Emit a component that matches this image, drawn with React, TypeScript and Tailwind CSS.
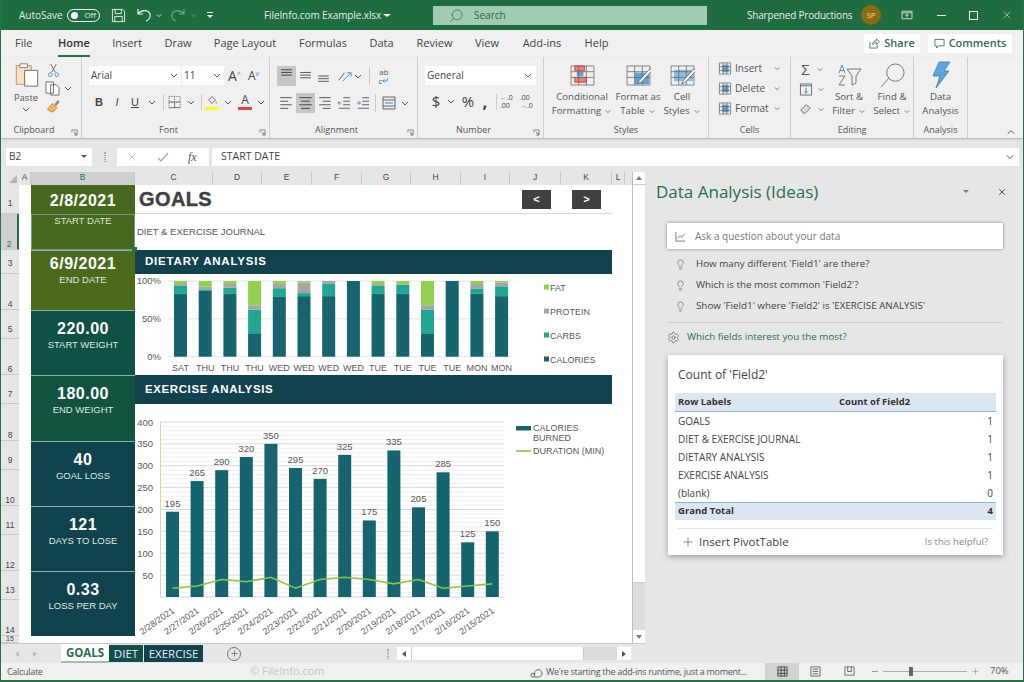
import { ChevronDown, ChevronUp, Lightbulb, Plus, Search, Settings, X } from "lucide-react";
import type { ReactNode } from "react";

const ui = { fontFamily: '"Open Sans", "Noto Sans", sans-serif' };
const arial = { fontFamily: '"Liberation Sans", Arial, sans-serif' };

function Chev({ className = "" }: { className?: string }) {
  return (
    <svg viewBox="0 0 8 5" className={`h-[5px] w-[8px] shrink-0 ${className}`} fill="none" stroke="#555" strokeWidth="1">
      <path d="M1 1l3 3 3-3" />
    </svg>
  );
}

function Slot({ className = "", children }: { className?: string; children?: ReactNode }) {
  return <span className={`flex shrink-0 items-center justify-center ${className}`}>{children}</span>;
}

function Lines({ ys, xs, active }: { ys?: number[]; xs: [number, number][]; active?: boolean }) {
  const rows = ys ?? [3, 7, 11, 15];
  return (
    <svg viewBox="0 0 16 18" className="h-[16px] w-[15px]" stroke={active ? "#444" : "#555"} strokeWidth="1.1">
      {rows.map((y, i) => (
        <path key={y} d={`M${xs[i % xs.length][0]} ${y}H${xs[i % xs.length][1]}`} />
      ))}
    </svg>
  );
}

function TitleBar() {
  return (
    <div className="flex h-[30px] shrink-0 items-center bg-[#1f6c41] text-[#e6efe9]" style={ui}>
      <span className="ml-[18px] w-[48px] shrink-0 text-[10px]">AutoSave</span>
      <span className="flex h-[13px] w-[33px] shrink-0 items-center justify-between rounded-full border border-white px-[3px] text-[8px]">
        <span className="h-[7px] w-[7px] rounded-full bg-white" />
        <span>Off</span>
      </span>
      <svg viewBox="0 0 16 16" className="ml-[11px] h-[15px] w-[15px] shrink-0" fill="none" stroke="#e6efe9" strokeWidth="1">
        <path d="M1.500 1.500h11l2 2v11h-13zM4.500 1.500v4.500h6.500v-4.500M4 14.500v-5.500h8v5.500" />
      </svg>
      <svg viewBox="0 0 16 16" className="ml-[10px] h-[16px] w-[16px] shrink-0" fill="none" stroke="#e6efe9" strokeWidth="1.2">
        <path d="M2 2v5h5M2 7c3-4 10-5 12 0 1 3-1 6-4 7" />
      </svg>
      <Chev className="ml-[3px] scale-75 [&_path]:stroke-white" />
      <svg viewBox="0 0 16 16" className="ml-[7px] h-[16px] w-[16px] shrink-0 opacity-40" fill="none" stroke="#e6efe9" strokeWidth="1.2">
        <path d="M14 2v5h-5M14 7c-3-4-10-5-12 0-1 3 1 6 4 7" />
      </svg>
      <Chev className="ml-[4px] scale-75 opacity-40 [&_path]:stroke-white" />
      <svg viewBox="0 0 8 8" className="ml-[8px] h-[8px] w-[8px] shrink-0" fill="#e6efe9">
        <path d="M1 1h6v1H1zM1 4h6L4 7z" />
      </svg>
      <span className="ml-[50px] w-[115px] shrink-0 whitespace-nowrap text-[10px] tracking-[-0.1px]">FileInfo.com Example.xlsx</span>
      <span className="ml-[4px] h-0 w-0 shrink-0 border-x-[4px] border-t-[3px] border-x-transparent border-t-white" />
      <div className="ml-[42px] flex h-[19px] w-[274px] shrink-0 items-center bg-[#a1ccb3] text-[#2a6a46]">
        <Search className="ml-[16px] h-[15px] w-[15px] -scale-x-100" strokeWidth={1.2} />
        <span className="ml-[10px] text-[10px]">Search</span>
      </div>
      <span className="ml-[40px] w-[106px] shrink-0 whitespace-nowrap text-[10px] tracking-[-0.2px]">Sharpened Productions</span>
      <span className="ml-[8px] flex h-[20px] w-[20px] shrink-0 items-center justify-center rounded-full bg-[#8a6a12] text-[8px] text-[#e8d9a8]">SP</span>
      <svg viewBox="0 0 14 12" className="ml-[20px] h-[10px] w-[12px] shrink-0" fill="none" stroke="#e6efe9" strokeWidth="1">
        <path d="M1 1.500h12v9H1zM1 3.500h12M7 9V5M5 7l2-2 2 2" />
      </svg>
      <span className="ml-[24px] h-px w-[9px] shrink-0 bg-[#e6efe9]" />
      <span className="ml-[23px] h-[9px] w-[9px] shrink-0 border border-[#e6efe9]" />
      <X className="ml-[23px] h-[12px] w-[12px] shrink-0" strokeWidth={1.2} />
    </div>
  );
}

const tabs = [
  { label: "File", cls: "w-[40px] pl-[14px] text-left" },
  { label: "Home", cls: "ml-[10px] w-[46px] text-center" },
  { label: "Insert", cls: "w-[60px] text-center" },
  { label: "Draw", cls: "w-[42px] text-center" },
  { label: "Page Layout", cls: "w-[92px] text-center" },
  { label: "Formulas", cls: "w-[64px] text-center" },
  { label: "Data", cls: "w-[53px] text-center" },
  { label: "Review", cls: "w-[53px] text-center" },
  { label: "View", cls: "w-[52px] text-center" },
  { label: "Add-ins", cls: "w-[58px] text-center" },
  { label: "Help", cls: "w-[51px] text-center" },
];

function RibbonTabs() {
  return (
    <div className="flex h-[27px] shrink-0 items-center bg-[#f0f0f0] text-[11px] text-[#444]" style={ui}>
      {tabs.map((t) =>
        t.label === "Home" ? (
          <span key={t.label} className={`relative ${t.cls} font-semibold text-[#333]`}>
            Home
            <span className="absolute -bottom-[5px] left-[7px] h-[2px] w-[32px] bg-[#217346]" />
          </span>
        ) : (
          <span key={t.label} className={t.cls}>
            {t.label}
          </span>
        ),
      )}
      <span className="ml-auto flex h-[19px] w-[56px] items-center justify-center gap-[4px] bg-white text-[11px] font-semibold text-[#2c6e4d]">
        <svg viewBox="0 0 12 12" className="h-[11px] w-[11px]" fill="none" stroke="#2c6e4d" strokeWidth="0.9">
          <path d="M1 4.500v6.500h8V8M4 7c0-3 2-4 4-4V1l3.500 3L8 7V5C6 5 5 6 4 7z" />
        </svg>
        Share
      </span>
      <span className="ml-[8px] mr-[11px] flex h-[19px] w-[84px] items-center justify-center gap-[4px] bg-white text-[11px] font-semibold text-[#2c6e4d]">
        <svg viewBox="0 0 12 12" className="h-[11px] w-[11px]" fill="none" stroke="#2c6e4d" strokeWidth="0.9">
          <path d="M1 1.500h10v7H5L3 11V8.500H1z" />
        </svg>
        Comments
      </span>
    </div>
  );
}

function Group({ label, width, launcher, children }: { label: string; width: string; launcher?: boolean; children: ReactNode }) {
  return (
    <div className={`flex shrink-0 flex-col border-r border-[#cfcfcf] ${width}`}>
      <div className="h-[66px]">{children}</div>
      <div className={`relative h-[14px] text-center text-[9px] leading-[14px] text-[#555] ${launcher ? "pr-[14px]" : ""}`}>
        {label}
        {launcher && (
          <svg viewBox="0 0 8 8" className="absolute bottom-[1px] right-[3px] h-[7px] w-[7px]" fill="none" stroke="#666" strokeWidth="0.8">
            <path d="M1 4V1h6v6H4M3 3l3 3M6 4v2H4" />
          </svg>
        )}
      </div>
    </div>
  );
}

function PasteIcon() {
  return (
    <svg viewBox="0 0 26 28" className="h-[26px] w-[25px]" fill="none">
      <path d="M2 4h16v20H2z" fill="#f6e3c6" stroke="#c98a3c" />
      <path d="M6 2h8v4H6z" fill="#fff" stroke="#777" />
      <path d="M11 9h14v17H11z" fill="#fff" stroke="#666" />
    </svg>
  );
}

function Clipboard() {
  return (
    <Group label="Clipboard" width="w-[81px]" launcher>
      <div className="flex h-full pl-[10px] pt-[5px]">
        <div className="flex w-[30px] flex-col items-center">
          <PasteIcon />
          <span className="mt-[3px] text-[9.5px] leading-[13px] text-[#555]">Paste</span>
          <Chev className="mt-[3px]" />
        </div>
        <div className="ml-[4px] flex flex-col gap-[3px] pt-[1px]">
          <svg viewBox="0 0 14 16" className="ml-[2px] h-[15px] w-[13px]" fill="none" stroke="#4a90c8">
            <path d="M4 1l5 9M10 1L5 10" stroke="#666" />
            <circle cx="3.500" cy="12.500" r="2" />
            <circle cx="10.500" cy="12.500" r="2" />
          </svg>
          <span className="flex items-center gap-[4px]">
            <svg viewBox="0 0 16 16" className="h-[15px] w-[15px]" fill="#fff" stroke="#666">
              <path d="M1 1h8v12H1zM6 4h6l3 3v8H6z" />
            </svg>
            <Chev />
          </span>
          <svg viewBox="0 0 16 16" className="ml-[1px] h-[14px] w-[15px]">
            <path d="M1 12l6-7 5 5-5 5z" fill="#f2b45c" stroke="#d0752a" />
            <path d="M9 6l4-5 2 2-4 5z" fill="#888" />
          </svg>
        </div>
      </div>
    </Group>
  );
}

function FontGroup() {
  return (
    <Group label="Font" width="w-[188px]" launcher>
      <div className="flex items-center pl-[7px] pt-[9px]">
        <div className="flex h-[19px] w-[92px] items-center justify-between bg-white pl-[2px] pr-[3px] text-[10px] text-[#444]">
          Arial <Chev />
        </div>
        <div className="ml-px flex h-[19px] w-[42px] items-center justify-between bg-white pl-[2px] pr-[3px] text-[10px] text-[#444]">
          11 <Chev />
        </div>
        <span className="ml-[4px] w-[17px] text-[14px] leading-none text-[#444]">
          A<sup className="text-[7px] text-[#3a87c8]">^</sup>
        </span>
        <span className="ml-[3px] w-[15px] text-[12px] leading-none text-[#444]">
          A<sup className="text-[7px] text-[#3a87c8]">v</sup>
        </span>
      </div>
      <div className="mt-[9px] flex items-center pl-[11px] text-[11px] leading-none text-[#444]" style={arial}>
        <Slot className="w-[12px] font-bold">B</Slot>
        <Slot className="ml-[6px] w-[12px] italic">I</Slot>
        <Slot className="ml-[6px] w-[12px] underline">U</Slot>
        <Slot className="w-[22px]">
          <Chev />
        </Slot>
        <span className="h-[16px] w-px bg-[#ccc]" />
        <svg viewBox="0 0 14 14" className="ml-[4px] h-[14px] w-[14px]" fill="none" stroke="#777">
          <path d="M1 1h12v12H1zM7 1v12M1 7h12" strokeDasharray="1.500 1" />
          <path d="M1 7h12M7 7v6M1 13h12" />
        </svg>
        <Slot className="w-[20px]">
          <Chev />
        </Slot>
        <span className="h-[16px] w-px bg-[#ccc]" />
        <span className="ml-[3px] flex w-[14px] flex-col items-center">
          <svg viewBox="0 0 14 10" className="h-[10px] w-[12px]" fill="none" stroke="#555">
            <path d="M3 5l4-4 4 4-4 4z" />
            <path d="M12 7v2" stroke="#3a87c8" />
          </svg>
          <span className="mt-[2px] h-[3px] w-[14px] bg-[#ffff00]" />
        </span>
        <Slot className="w-[18px]">
          <Chev />
        </Slot>
        <span className="ml-[1px] flex w-[14px] flex-col items-center text-[12px]" style={ui}>
          <span className="h-[12px] leading-[12px]">A</span>
          <span className="mt-[1px] h-[3px] w-[14px] bg-[#e8403a]" />
        </span>
        <Slot className="w-[17px]">
          <Chev />
        </Slot>
      </div>
    </Group>
  );
}

function AlignmentGroup() {
  return (
    <Group label="Alignment" width="w-[148px]" launcher>
      <div className="box-content flex h-[20px] items-center pl-[7px] pt-[9px]">
        <Slot className="h-[20px] w-[19px] bg-[#c6c6c6]">
          <Lines ys={[2, 5, 8]} xs={[[2, 14]]} active />
        </Slot>
        <Slot className="w-[18px]">
          <Lines ys={[5, 8, 11]} xs={[[2, 14]]} />
        </Slot>
        <Slot className="w-[18px]">
          <Lines ys={[9, 12, 15]} xs={[[2, 14]]} />
        </Slot>
        <svg viewBox="0 0 16 16" className="ml-[5px] h-[15px] w-[15px]" fill="none" stroke="#555">
          <path d="M2 12L8 4" />
          <path d="M6 13L14 5M11 4h4v4" stroke="#3a87c8" />
        </svg>
        <Slot className="w-[12px]">
          <Chev />
        </Slot>
        <span className="ml-[5px] h-[18px] w-px bg-[#ccc]" />
        <span className="ml-[6px] flex w-[16px] flex-col items-center text-[8px] leading-[9px] text-[#555]">
          <span>ab</span>
          <span className="flex items-center">
            c
            <svg viewBox="0 0 8 8" className="h-[7px] w-[7px]" fill="none" stroke="#3a87c8">
              <path d="M6 1v3.500H1M3 2.500L1 4.500l2 2" />
            </svg>
          </span>
        </span>
      </div>
      <div className="mt-[7px] flex h-[20px] items-center pl-[6px]">
        <Slot className="w-[20px]">
          <Lines xs={[[1, 14], [1, 10]]} />
        </Slot>
        <Slot className="h-[20px] w-[19px] bg-[#c6c6c6]">
          <Lines xs={[[1, 15], [3, 13]]} active />
        </Slot>
        <Slot className="w-[19px]">
          <Lines xs={[[2, 15], [6, 15]]} />
        </Slot>
        <Slot className="w-[19px]">
          <svg viewBox="0 0 16 16" className="h-[14px] w-[14px]" stroke="#555">
            <path d="M7 2h8M7 6h8M7 10h8M2 14h13" />
            <path d="M5 8H1M3 6L1 8l2 2" stroke="#3a87c8" fill="none" />
          </svg>
        </Slot>
        <Slot className="w-[19px]">
          <svg viewBox="0 0 16 16" className="h-[14px] w-[14px]" stroke="#555">
            <path d="M7 2h8M7 6h8M7 10h8M2 14h13" />
            <path d="M1 8h4M3 6l2 2-2 2" stroke="#3a87c8" fill="none" />
          </svg>
        </Slot>
        <span className="ml-[3px] h-[18px] w-px bg-[#ccc]" />
        <svg viewBox="0 0 14 14" className="ml-[6px] h-[14px] w-[14px]" fill="none" stroke="#666">
          <path d="M1 1h12v12H1zM1 4h12M1 10h12" />
          <path d="M3 7h8" stroke="#3a87c8" />
        </svg>
        <Slot className="w-[18px]">
          <Chev />
        </Slot>
      </div>
    </Group>
  );
}

function NumberGroup() {
  return (
    <Group label="Number" width="w-[126px]" launcher>
      <div className="pl-[7px] pt-[9px]">
        <div className="flex h-[19px] w-[111px] items-center justify-between bg-white pl-[2px] pr-[4px] text-[10px] text-[#444]">
          General <Chev />
        </div>
      </div>
      <div className="mt-[8px] flex items-center pl-[12px] text-[#444]">
        <Slot className="w-[12px] text-[15px] leading-none">$</Slot>
        <Slot className="w-[18px]">
          <Chev />
        </Slot>
        <Slot className="w-[16px] text-[15px] leading-none">%</Slot>
        <Slot className="ml-[5px] w-[8px] text-[17px] font-bold leading-none">,</Slot>
        <span className="ml-[7px] h-[16px] w-px bg-[#ccc]" />
        <span className="ml-[3px] w-[18px] text-[7px] leading-[8px]">
          <span className="text-[#3a87c8]">←</span>.0
          <br />
          .00
        </span>
        <span className="ml-[2px] w-[18px] text-[7px] leading-[8px]">
          .00
          <br />
          <span className="text-[#3a87c8]">→</span>.0
        </span>
      </div>
    </Group>
  );
}

function TableIcon({ kind }: { kind: "cond" | "table" | "cell" }) {
  return (
    <svg viewBox="0 0 26 22" className="h-[21px] w-[25px]" fill="none">
      {kind === "cond" && (
        <>
          <path d="M5 1h10v5H5zM5 13h12v5H5z" fill="#f47c7c" stroke="#e03b3b" />
          <path d="M7 7h7v5H7z" fill="#5ea5dd" />
        </>
      )}
      {kind === "table" && <path d="M9 8h15v12H9z" fill="#5ea5dd" />}
      {kind === "cell" && <path d="M4 5h20v12H4z" fill="#8cc0e8" />}
      <path d="M1 1h24v20H1zM1 7h24M1 13h24M9 1v20M17 1v20" stroke="#666" strokeWidth="0.8" />
      {kind !== "cond" && <path d="M25 4L14 16l-2 4 4-2L27 6z" fill="#fff" stroke="#555" strokeWidth="0.8" />}
    </svg>
  );
}

function BigButton({ icon, lines, width, chev = true }: { icon: ReactNode; lines: [string, string]; width: string; chev?: boolean }) {
  return (
    <div className={`flex shrink-0 flex-col items-center pt-[4px] text-[9.7px] leading-[14px] text-[#555] ${width}`}>
      <span className="flex h-[28px] items-center">{icon}</span>
      <span className="mt-[1px] whitespace-nowrap">{lines[0]}</span>
      <span className="flex items-center gap-[3px] whitespace-nowrap">
        {lines[1]}
        {chev && <Chev className="scale-75" />}
      </span>
    </div>
  );
}

function CellsRow({ label, color }: { label: string; color: string }) {
  return (
    <div className="flex h-[20px] items-center pl-[9px] text-[10px] text-[#555]">
      <svg viewBox="0 0 14 14" className="h-[13px] w-[14px]" fill="none" stroke="#666" strokeWidth="0.8">
        <path d="M4 3h7v8H4z" fill={color} stroke="none" />
        <path d="M1 1h12v12H1zM1 5h12M1 9h12M5 1v12M9 1v12" />
      </svg>
      <span className="ml-[3px] w-[38px]">{label}</span>
      <Chev className="scale-75" />
    </div>
  );
}

function Ribbon() {
  return (
    <div className="relative z-10 flex h-[81px] shrink-0 bg-[#f0f0f0] shadow-[0_1px_2px_rgba(0,0,0,0.25)]" style={ui}>
      <Clipboard />
      <FontGroup />
      <AlignmentGroup />
      <NumberGroup />
      <Group label="Styles" width="w-[165px]">
        <div className="flex pl-[3px]">
          <BigButton width="w-[70px]" lines={["Conditional", "Formatting"]} icon={<TableIcon kind="cond" />} />
          <BigButton width="w-[42px]" lines={["Format as", "Table"]} icon={<TableIcon kind="table" />} />
          <BigButton width="w-[46px]" lines={["Cell", "Styles"]} icon={<TableIcon kind="cell" />} />
        </div>
      </Group>
      <Group label="Cells" width="w-[82px]">
        <div className="pt-[1px]">
          <CellsRow label="Insert" color="#5ea5dd" />
          <CellsRow label="Delete" color="#5ea5dd" />
          <CellsRow label="Format" color="#5ea5dd" />
        </div>
      </Group>
      <Group label="Editing" width="w-[123px]">
        <div className="flex">
          <div className="flex w-[36px] flex-col pl-[8px] pt-[2px] text-[#555]">
            <span className="flex h-[20px] items-center gap-[4px]">
              <span className="w-[13px] text-center text-[15px] leading-none">Σ</span>
              <Chev className="scale-75" />
            </span>
            <span className="flex h-[20px] items-center gap-[4px]">
              <svg viewBox="0 0 14 14" className="h-[13px] w-[14px]" fill="none" stroke="#666">
                <path d="M1 1h12v12H1zM1 3h12" />
                <path d="M7 5v6M5 9l2 2 2-2" stroke="#3a87c8" />
              </svg>
              <Chev className="scale-75" />
            </span>
            <span className="flex h-[20px] items-center gap-[4px]">
              <svg viewBox="0 0 14 14" className="h-[12px] w-[14px]" fill="#ddd" stroke="#666">
                <path d="M1 8l6-6 5 4-6 6H4z" />
              </svg>
              <Chev className="scale-75" />
            </span>
          </div>
          <BigButton
            width="w-[44px]"
            lines={["Sort &", "Filter"]}
            icon={
              <svg viewBox="0 0 26 24" className="h-[24px] w-[26px]" fill="none" stroke="#666" strokeWidth="0.9">
                <path d="M3 10l3-8 3 8M4 7.500h4" stroke="#3a87c8" />
                <path d="M3 13h6l-6 9h6M11 6h14l-5 7v7l-4 2v-9z" />
              </svg>
            }
          />
          <BigButton
            width="w-[42px]"
            lines={["Find &", "Select"]}
            icon={
              <svg viewBox="0 0 26 26" className="h-[25px] w-[25px]" fill="none" stroke="#666" strokeWidth="0.9">
                <circle cx="16" cy="10" r="9" />
                <path d="M9 16L1 25" />
              </svg>
            }
          />
        </div>
      </Group>
      <Group label="Analysis" width="w-[54px]">
        <BigButton
          width="w-full"
          chev={false}
          lines={["Data", "Analysis"]}
          icon={
            <svg viewBox="0 0 20 28" className="h-[28px] w-[20px]" fill="#5ea5dd" stroke="#2f7fbf" strokeWidth="0.8">
              <path d="M8 1h11l-6 9h5L5 27l4-12H2z" />
            </svg>
          }
        />
      </Group>
      <ChevronUp className="ml-auto mr-[6px] mt-[69px] h-[12px] w-[12px] text-[#555]" />
    </div>
  );
}

function FormulaBar() {
  return (
    <div className="flex h-[34px] shrink-0 items-center bg-[#e6e6e6] pl-[5px] pr-[4px] pt-[3px] text-[#444]" style={ui}>
      <div className="flex h-[18px] w-[86px] items-center justify-between bg-white pl-[3px] pr-[5px] text-[10px]">
        B2
        <span className="h-0 w-0 border-x-[3px] border-t-[3px] border-x-transparent border-t-[#555]" />
      </div>
      <span className="ml-[12px] h-[10px] w-[2px] border-x border-dotted border-[#aaa]" />
      <div className="ml-[11px] flex h-[18px] w-[92px] items-center bg-white text-[#aaa]">
        <X className="ml-[9px] h-[12px] w-[12px]" strokeWidth={1.3} />
        <svg viewBox="0 0 12 12" className="ml-[19px] h-[12px] w-[12px]" fill="none" stroke="#aaa" strokeWidth="1.3">
          <path d="M1 7l3 3 7-8" />
        </svg>
        <span className="ml-[19px] text-[12px] italic text-[#555]" style={{ fontFamily: '"Liberation Serif", serif' }}>
          fx
        </span>
      </div>
      <div className="ml-[3px] flex h-[18px] flex-1 items-center justify-between bg-white pl-[9px] pr-[3px] text-[10.5px]">
        START DATE
        <ChevronDown className="h-[12px] w-[12px] text-[#555]" />
      </div>
    </div>
  );
}

const cols = [
  { label: "A", cls: "w-[12px]" },
  { label: "B", cls: "w-[104px] bg-[#cfcfcf] text-[#217346]" },
  { label: "C", cls: "w-[78px]" },
  { label: "D", cls: "w-[49px]" },
  { label: "E", cls: "w-[50px]" },
  { label: "F", cls: "w-[50px]" },
  { label: "G", cls: "w-[49px]" },
  { label: "H", cls: "w-[50px]" },
  { label: "I", cls: "w-[49px]" },
  { label: "J", cls: "w-[51px]" },
  { label: "K", cls: "w-[51px]" },
  { label: "L", cls: "w-[13px]" },
];

const rows = [
  { n: 1, h: "h-[29px] pb-[5px]" },
  { n: 2, h: "h-[36px]", on: true },
  { n: 3, h: "h-[24px] pb-[5px]" },
  { n: 4, h: "h-[36px]" },
  { n: 5, h: "h-[29px] pb-[4px]" },
  { n: 6, h: "h-[36px]" },
  { n: 7, h: "h-[29px] pb-[4px]" },
  { n: 8, h: "h-[37px]" },
  { n: 9, h: "h-[29px] pb-[4px]" },
  { n: 10, h: "h-[36px]" },
  { n: 11, h: "h-[29px] pb-[4px]" },
  { n: 12, h: "h-[36px]" },
  { n: 13, h: "h-[29px] pb-[4px]" },
  { n: 14, h: "h-[36px]" },
  { n: 15, h: "h-[7px] text-[7px] leading-[7px]" },
];

function ColHeaders() {
  return (
    <div className="flex h-[13px] shrink-0 bg-[#e6e6e6] text-[8.5px] text-[#444]" style={arial}>
      <div className="relative w-[18px] shrink-0">
        <span className="absolute bottom-[2px] right-[2px] h-0 w-0 border-b-[8px] border-l-[8px] border-b-[#b5b5b5] border-l-transparent" />
      </div>
      {cols.map((c) => (
        <span key={c.label} className={`flex shrink-0 items-end justify-center border-r border-[#c8c8c8] pb-px ${c.cls}`}>
          {c.label}
        </span>
      ))}
    </div>
  );
}

function RowHeaders() {
  return (
    <div className="flex w-[18px] shrink-0 flex-col bg-[#e6e6e6] text-[8.5px] leading-[10px] text-[#444]" style={arial}>
      {rows.map((r) => (
        <span
          key={r.n}
          className={`flex shrink-0 items-end justify-center border-b border-[#c8c8c8] ${r.h} ${
            r.on ? "border-r-2 border-r-[#217346] bg-[#cfcfcf] text-[#217346]" : ""
          }`}
        >
          {r.n}
        </span>
      ))}
    </div>
  );
}

const stats = [
  { value: "6/9/2021", label: "END DATE", cls: "h-[60px] bg-[#4a6b1c] pt-[4px]" },
  { value: "220.00", label: "START WEIGHT", cls: "h-[65px] bg-[#0f5047] pt-[9px]" },
  { value: "180.00", label: "END WEIGHT", cls: "h-[66px] bg-[#12543f] pt-[9px]" },
  { value: "40", label: "GOAL LOSS", cls: "h-[65px] bg-[#10434d] pt-[9px]" },
  { value: "121", label: "DAYS TO LOSE", cls: "h-[65px] bg-[#10434d] pt-[9px]" },
  { value: "0.33", label: "LOSS PER DAY", cls: "h-[65px] bg-[#10434d] pt-[9px]" },
];

function StatColumn() {
  return (
    <div className="w-[104px] shrink-0 text-center text-white" style={arial}>
      <div className="h-[65px] bg-[#47691d]">
        <div className="h-[29px] pt-[7px] text-[16px] font-bold leading-[18px] tracking-[0.5px]">2/8/2021</div>
        <div className="relative h-[36px] border border-[#6d9a8d] text-[9.5px] leading-[12px] text-[#dfe6d4]">
          START DATE
          <span className="absolute -bottom-[3px] -right-[3px] h-[5px] w-[5px] bg-[#217346]" />
        </div>
      </div>
      {stats.map((s) => (
        <div key={s.label} className={`border-t border-[#8fb0aa] ${s.cls}`}>
          <div className="text-[16px] font-bold leading-[18px] tracking-[0.5px]">{s.value}</div>
          <div className="text-[9.5px] leading-[14px] text-[#dfe8e4]">{s.label}</div>
        </div>
      ))}
    </div>
  );
}

const dietBars = [
  { d: "SAT", v: [83, 10.5, 2.5, 4] },
  { d: "THU", v: [87, 2, 3.5, 7.5] },
  { d: "THU", v: [83, 8, 5, 4] },
  { d: "THU", v: [31, 31, 6, 32] },
  { d: "WED", v: [79, 11.5, 5.5, 4] },
  { d: "WED", v: [80, 4, 14, 2] },
  { d: "WED", v: [80, 16, 4, 0] },
  { d: "WED", v: [100, 0, 0, 0] },
  { d: "TUE", v: [83, 10.5, 2.5, 4] },
  { d: "TUE", v: [83, 12, 1, 4] },
  { d: "TUE", v: [31, 31, 6, 32] },
  { d: "TUE", v: [100, 0, 0, 0] },
  { d: "MON", v: [83, 6.5, 6.5, 4] },
  { d: "MON", v: [80, 13, 5, 2] },
];
const dietColors = ["#166470", "#1fa88f", "#a6a6a6", "#92d050"];
const dietLegend = [
  { t: "FAT", c: "#92d050", y: 13 },
  { t: "PROTEIN", c: "#a6a6a6", y: 37 },
  { t: "CARBS", c: "#1fa88f", y: 61 },
  { t: "CALORIES", c: "#166470", y: 85 },
];

function DietChart() {
  const top = 7;
  const h = 75.7;
  return (
    <svg viewBox="0 0 477 101" className="block h-[101px] w-[477px]" style={arial}>
      {[0, 0.5, 1].map((f) => (
        <path key={f} d={`M33 ${top + h * f}H378`} stroke="#e4e4e4" strokeWidth="1" />
      ))}
      {["100%", "50%", "0%"].map((t, i) => (
        <text key={t} x="26" y={top + 3 + (h / 2) * i} textAnchor="end" fontSize="9.5" fill="#595959">
          {t}
        </text>
      ))}
      {dietBars.map((b, i) => {
        const x = 39 + i * 24.7;
        let acc = 0;
        return (
          <g key={i}>
            {b.v.map((p, j) => {
              const bh = (p / 100) * h;
              const y = top + h - acc - bh;
              acc += bh;
              return <rect key={j} x={x} y={y} width="13" height={bh} fill={dietColors[j]} />;
            })}
            <text x={x + 6.5} y="96.5" textAnchor="middle" fontSize="9" fill="#595959">
              {b.d}
            </text>
          </g>
        );
      })}
      {dietLegend.map((l) => (
        <g key={l.t}>
          <rect x="409" y={l.y - 2.5} width="5" height="5" fill={l.c} />
          <text x="415" y={l.y + 3.5} fontSize="9" fill="#595959">
            {l.t}
          </text>
        </g>
      ))}
    </svg>
  );
}

const burn = [
  { d: "2/28/2021", v: 195, m: 20 },
  { d: "2/27/2021", v: 265, m: 25 },
  { d: "2/26/2021", v: 290, m: 40 },
  { d: "2/25/2021", v: 320, m: 35 },
  { d: "2/24/2021", v: 350, m: 45 },
  { d: "2/23/2021", v: 295, m: 20 },
  { d: "2/22/2021", v: 270, m: 40 },
  { d: "2/21/2021", v: 325, m: 45 },
  { d: "2/20/2021", v: 175, m: 40 },
  { d: "2/19/2021", v: 335, m: 30 },
  { d: "2/18/2021", v: 205, m: 40 },
  { d: "2/17/2021", v: 285, m: 20 },
  { d: "2/16/2021", v: 125, m: 25 },
  { d: "2/15/2021", v: 150, m: 30 },
];

function BurnChart() {
  const base = 193;
  const sc = 175 / 400;
  const ticks = Array.from({ length: 41 }, (_, i) => i * 10);
  const line = burn.map((b, i) => `${37.5 + i * 24.6},${base - b.m * sc}`).join(" ");
  return (
    <svg viewBox="0 0 477 232" className="block h-[232px] w-[477px]" style={arial}>
      {ticks.map((t) => (
        <path key={t} d={`M25 ${base - t * sc}H369`} stroke={t % 50 === 0 ? "#d9d9d9" : "#efefef"} strokeWidth="1" />
      ))}
      <path d={`M25.5 18V${base}`} stroke="#c9dfa8" strokeWidth="1" />
      {[50, 100, 150, 200, 250, 300, 350, 400].map((t) => (
        <text key={t} x="18" y={base - t * sc + 3.5} textAnchor="end" fontSize="9.5" fill="#595959">
          {t}
        </text>
      ))}
      {burn.map((b, i) => {
        const x = 31 + i * 24.6;
        const bh = b.v * sc;
        return (
          <g key={b.d}>
            <rect x={x} y={base - bh} width="13" height={bh} fill="#166470" />
            <text x={x + 6.5} y={base - bh - 5} textAnchor="middle" fontSize="9.5" fill="#595959">
              {b.v}
            </text>
            <text
              x={x + 9}
              y={base + 15}
              textAnchor="end"
              fontSize="9"
              fill="#595959"
              transform={`rotate(-35 ${x + 9} ${base + 15})`}
            >
              {b.d}
            </text>
          </g>
        );
      })}
      <polyline points={line} fill="none" stroke="#8cc63f" strokeWidth="1.6" />
      <rect x="381" y="22" width="15" height="4.5" fill="#166470" />
      <text x="398" y="27" fontSize="9" fill="#595959">
        CALORIES
      </text>
      <text x="398" y="37" fontSize="9" fill="#595959">
        BURNED
      </text>
      <path d="M381 47H396" stroke="#8cc63f" strokeWidth="1.6" />
      <text x="398" y="50" fontSize="9" fill="#595959">
        DURATION (MIN)
      </text>
    </svg>
  );
}

function SheetContent() {
  return (
    <div className="w-[477px] shrink-0 text-[#404040]" style={arial}>
      <div className="flex h-[29px] items-center border-b border-[#d9d9d9] pl-[4px]">
        <span className="text-[20px] font-bold tracking-[0.4px] [-webkit-text-stroke:0.4px_#404040]">GOALS</span>
        <span className="ml-auto flex h-[19px] w-[29px] items-center justify-center bg-[#404040] text-[11px] font-bold text-white">&lt;</span>
        <span className="ml-[21px] mr-[11px] flex h-[19px] w-[29px] items-center justify-center bg-[#404040] text-[11px] font-bold text-white">&gt;</span>
      </div>
      <div className="flex h-[36px] items-center pl-[2px] text-[9.5px] text-[#555]">DIET &amp; EXERCISE JOURNAL</div>
      <div className="flex h-[24px] items-center bg-[#11424e] pl-[10px] text-[11.5px] font-bold tracking-[0.8px] text-white">DIETARY ANALYSIS</div>
      <DietChart />
      <div className="flex h-[29px] items-center bg-[#11424e] pl-[10px] text-[11.5px] font-bold tracking-[0.6px] text-white">EXERCISE ANALYSIS</div>
      <BurnChart />
    </div>
  );
}

function VScroll() {
  return (
    <div className="flex w-[13px] shrink-0 flex-col border-l border-[#bdbdbd] bg-white">
      <span className="flex h-[13px] shrink-0 items-center justify-center border-b border-[#ccc]">
        <span className="h-0 w-0 border-x-[3px] border-b-[4px] border-x-transparent border-b-[#777]" />
      </span>
      <span className="h-[398px] shrink-0 border-b border-[#ccc] bg-white" />
      <span className="flex-1 bg-[#dcdcdc]" />
      <span className="flex h-[13px] shrink-0 items-center justify-center">
        <span className="h-0 w-0 border-x-[3px] border-t-[4px] border-x-transparent border-t-[#777]" />
      </span>
    </div>
  );
}

function SheetTabs() {
  return (
    <div className="flex h-[20px] shrink-0 items-center border-t border-[#c8c8c8] bg-[#e6e6e6] text-[11.5px]" style={ui}>
      <span className="ml-[14px] h-0 w-0 border-y-[3px] border-r-[4px] border-y-transparent border-r-[#bbb]" />
      <span className="ml-[14px] h-0 w-0 border-y-[3px] border-l-[4px] border-y-transparent border-l-[#bbb]" />
      <span className="ml-[24px] flex h-[19px] w-[48px] items-center justify-center border-b-2 border-[#9fbf9f] bg-white font-bold text-[#2a6e4d]">GOALS</span>
      <span className="flex h-[17px] w-[34px] items-center justify-center bg-[#10504a] text-[#e8f0ee]">DIET</span>
      <span className="ml-px flex h-[17px] w-[59px] items-center justify-center bg-[#11424e] text-[#e8f0ee]">EXERCISE</span>
      <span className="ml-[24px] flex h-[14px] w-[14px] items-center justify-center rounded-full border border-[#777]">
        <Plus className="h-[9px] w-[9px] text-[#666]" strokeWidth={2} />
      </span>
      <span className="ml-[146px] h-[10px] w-[2px] border-x border-dotted border-[#aaa]" />
      <span className="ml-[8px] flex h-[13px] w-[14px] items-center justify-center bg-white">
        <span className="h-0 w-0 border-y-[3px] border-r-[4px] border-y-transparent border-r-[#555]" />
      </span>
      <span className="h-[13px] w-[173px] border-x border-[#ccc] bg-white" />
      <span className="h-[13px] w-[33px] bg-[#dcdcdc]" />
      <span className="flex h-[13px] w-[14px] items-center justify-center bg-white">
        <span className="h-0 w-0 border-y-[3px] border-l-[4px] border-y-transparent border-l-[#555]" />
      </span>
    </div>
  );
}

const suggestions = [
  "How many different 'Field1' are there?",
  "Which is the most common 'Field2'?",
  "Show 'Field1' where 'Field2' is 'EXERCISE ANALYSIS'",
];
const pivot = [
  { l: "GOALS", n: 1 },
  { l: "DIET & EXERCISE JOURNAL", n: 1 },
  { l: "DIETARY ANALYSIS", n: 1 },
  { l: "EXERCISE ANALYSIS", n: 1 },
  { l: "(blank)", n: 0 },
];

function DataPanel() {
  return (
    <div className="flex w-[378px] shrink-0 flex-col bg-[#e6e6e6]" style={ui}>
      <div className="flex h-[39px] shrink-0 items-center pl-[11px]">
        <span className="text-[17px] text-[#2a6e4d]">Data Analysis (Ideas)</span>
        <span className="ml-auto h-0 w-0 border-x-[3px] border-t-[3px] border-x-transparent border-t-[#777]" />
        <X className="ml-[28px] mr-[16px] h-[10px] w-[10px] text-[#555]" strokeWidth={2.4} />
      </div>
      <div className="ml-[22px] mt-[12px] flex h-[26px] w-[336px] shrink-0 items-center bg-white pl-[8px] text-[10px] text-[#777] shadow-[0_0_3px_rgba(0,0,0,0.45)]">
        <svg viewBox="0 0 12 12" className="h-[11px] w-[11px]" fill="none" stroke="#666" strokeWidth="0.9">
          <path d="M1 1v10h10M2.500 8l3-3 2 2 3-4" />
        </svg>
        <span className="ml-[9px]">Ask a question about your data</span>
      </div>
      <div className="ml-[30px] mt-[5px] flex flex-col text-[9.8px] text-[#444]">
        {suggestions.map((s) => (
          <div key={s} className="flex h-[21px] items-center">
            <Lightbulb className="h-[11px] w-[11px] text-[#555]" strokeWidth={1.3} />
            <span className="ml-[10px] whitespace-nowrap">{s}</span>
          </div>
        ))}
      </div>
      <div className="ml-[22px] mt-[5px] h-px w-[336px] shrink-0 bg-[#cfcfcf]" />
      <div className="ml-[22px] flex h-[29px] shrink-0 items-center text-[9.8px] text-[#2a6e4d]">
        <Settings className="h-[13px] w-[13px] text-[#555]" strokeWidth={1.2} />
        <span className="ml-[7px]">Which fields interest you the most?</span>
      </div>
      <div className="ml-[23px] mt-[3px] w-[335px] shrink-0 bg-white px-[7px] shadow-[0_2px_6px_rgba(0,0,0,0.3)]">
        <div className="flex h-[38px] items-center pl-[3px] pt-[1px] text-[12px] text-[#444]">Count of 'Field2'</div>
        <div className="flex h-[19px] items-center border-b border-[#95b3d7] bg-[#dce6f1] pl-[3px] text-[9.5px] font-bold text-[#333]">
          <span className="w-[161px]">Row Labels</span>
          <span>Count of Field2</span>
        </div>
        {pivot.map((p) => (
          <div key={p.l} className="flex h-[18px] items-center justify-between px-[3px] text-[10px] text-[#444]">
            <span>{p.l}</span>
            <span>{p.n}</span>
          </div>
        ))}
        <div className="flex h-[18px] items-center justify-between border-t border-[#95b3d7] bg-[#dce6f1] px-[3px] text-[9.5px] font-bold text-[#333]">
          <span>Grand Total</span>
          <span>4</span>
        </div>
        <div className="mx-[3px] mt-[8px] flex h-[27px] items-center border-t border-[#e4e4e4] text-[#444]">
          <Plus className="ml-[3px] h-[14px] w-[14px]" strokeWidth={1} />
          <span className="ml-[4px] text-[11.5px]">Insert PivotTable</span>
          <span className="ml-auto mr-[5px] text-[9.5px] text-[#888]">Is this helpful?</span>
        </div>
      </div>
    </div>
  );
}

function StatusBar() {
  return (
    <div className="flex h-[17px] shrink-0 items-center bg-[#f0f0f0] text-[9px] tracking-[-0.3px] text-[#555]" style={ui}>
      <span className="ml-[6px] w-[243px] shrink-0">Calculate</span>
      <span className="w-[76px] shrink-0 whitespace-nowrap text-[11px] tracking-normal text-[#c4c4c4]">© FileInfo.com</span>
      <svg viewBox="0 0 16 14" className="ml-[204px] h-[13px] w-[15px] shrink-0" fill="none" stroke="#555">
        <path d="M5 10a4 4 0 114 3H5" />
        <circle cx="3" cy="11" r="2" />
      </svg>
      <span className="ml-px w-[219px] shrink-0 whitespace-nowrap">We're starting the add-ins runtime, just a moment...</span>
      <Slot className="h-[17px] w-[34px] bg-[#d2d2d2]">
        <svg viewBox="0 0 12 12" className="h-[11px] w-[11px]" fill="none" stroke="#444">
          <path d="M1 1h10v10H1zM1 4.500h10M1 8h10M4.500 1v10M8 1v10" />
        </svg>
      </Slot>
      <Slot className="ml-[11px] w-[11px]">
        <svg viewBox="0 0 12 12" className="h-[11px] w-[11px]" fill="none" stroke="#666">
          <path d="M1 1h10v10H1zM3 3.500h6M3 6h6M3 8.500h6" />
        </svg>
      </Slot>
      <Slot className="ml-[23px] w-[11px]">
        <svg viewBox="0 0 12 12" className="h-[11px] w-[11px]" fill="none" stroke="#666">
          <path d="M1 1h10v9H1zM4 1v5h4V1" />
        </svg>
      </Slot>
      <span className="ml-[17px] h-px w-[6px] shrink-0 bg-[#999]" />
      <span className="relative ml-[5px] h-px w-[84px] shrink-0 bg-[#aaa]">
        <span className="absolute -top-[4px] left-[26px] h-[9px] w-[4px] bg-[#666]" />
      </span>
      <Plus className="ml-[4px] h-[9px] w-[9px] shrink-0 text-[#777]" strokeWidth={1.2} />
      <span className="ml-[10px] shrink-0 text-[9.5px] tracking-normal">70%</span>
    </div>
  );
}

export default function App() {
  return (
    <div className="flex h-[682px] w-[1024px] flex-col overflow-hidden border-x border-b-2 border-[#217346] bg-[#e6e6e6]">
      <TitleBar />
      <RibbonTabs />
      <Ribbon />
      <FormulaBar />
      <div className="flex min-h-0 flex-1">
        <div className="flex w-[644px] shrink-0 flex-col">
          <div className="flex min-h-0 flex-1">
            <div className="flex w-[631px] shrink-0 flex-col overflow-hidden">
              <ColHeaders />
              <div className="flex min-h-0 flex-1 bg-white">
                <RowHeaders />
                <div className="w-[12px] shrink-0" />
                <StatColumn />
                <SheetContent />
              </div>
            </div>
            <VScroll />
          </div>
          <SheetTabs />
        </div>
        <DataPanel />
      </div>
      <StatusBar />
    </div>
  );
}
